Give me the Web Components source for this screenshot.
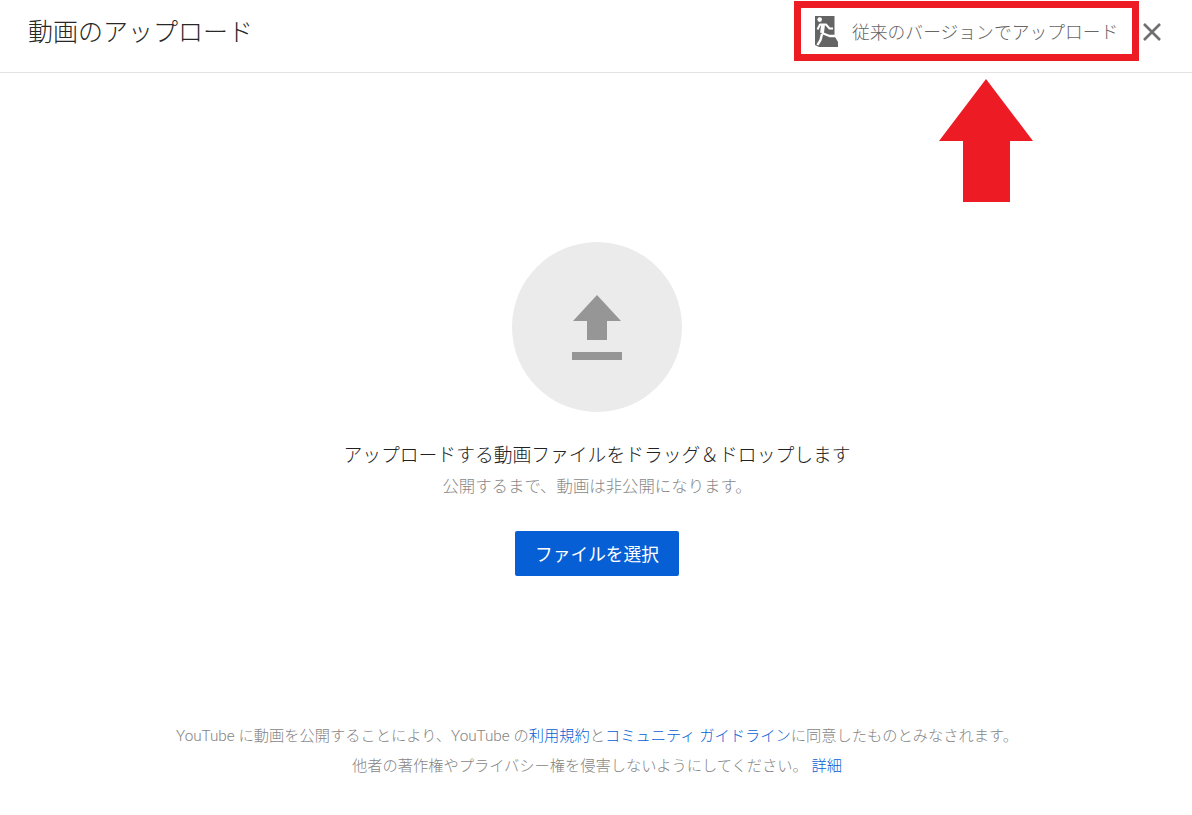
<!DOCTYPE html>
<html lang="ja">
<head>
<meta charset="utf-8">
<title>動画のアップロード</title>
<style>
  html, body { margin: 0; height: 100%; background: #fff; }
  body { font-family: Roboto, "Noto Sans CJK JP", sans-serif; overflow: hidden; }
</style>
</head>
<body>
<upload-dialog>
  <span slot="title">動画のアップロード</span>
  <legacy-link slot="legacy">従来のバージョンでアップロード</legacy-link>
  <upload-drop
    heading="アップロードする動画ファイルをドラッグ＆ドロップします"
    note="公開するまで、動画は非公開になります。"
    action="ファイルを選択"></upload-drop>
  <terms-note slot="footer"></terms-note>
</upload-dialog>

<script>
class UploadDialog extends HTMLElement {
  constructor() {
    super();
    this.attachShadow({ mode: 'open' });
  }

  connectedCallback() {
    this.shadowRoot.innerHTML = `
      <style>
        :host { display: flex; flex-direction: column; position: relative; height: 815px; }
        header {
          display: flex;
          align-items: center;
          height: 72px;
          padding: 0 30px 0 28px;
          border-bottom: 1px solid #e3e3e3;
        }
        .title { flex: 1; font-size: 25px; color: #282828; font-weight: 300; padding-bottom: 13px; }
        .close { display: block; margin-left: 3px; margin-top: -8px; }
        main { flex: 1; display: flex; flex-direction: column; align-items: center; padding-left: 2px; }
        .callout { position: absolute; left: 939px; top: 79px; }
      </style>
      <header>
        <div class="title"><slot name="title"></slot></div>
        <slot name="legacy"></slot>
        <svg class="close" width="20" height="20" viewBox="0 0 20 20">
          <path d="M2 2 18 18M18 2 2 18" stroke="#6f6f6f" stroke-width="2.6" fill="none"/>
        </svg>
      </header>
      <main><slot></slot></main>
      <slot name="footer"></slot>
      <svg class="callout" width="94" height="123" viewBox="0 0 94 123">
        <path d="M47 0 94 62H71V123H24V62H0Z" fill="#ed1c24"/>
      </svg>
    `;
  }
}

class LegacyLink extends HTMLElement {
  constructor() {
    super();
    this.attachShadow({ mode: 'open' });
  }

  connectedCallback() {
    this.shadowRoot.innerHTML = `
      <style>
        :host {
          display: flex;
          align-items: center;
          box-sizing: border-box;
          width: 345px;
          height: 60px;
          margin-top: -10px;
          padding: 0 14px;
          border: 7px solid #ed1c24;
          color: #666;
          font-size: 17.8px;
          font-weight: 300;
          white-space: nowrap;
        }
        svg { flex: none; margin-right: 14px; }
      </style>
      <svg width="23" height="31" viewBox="0 0 23 31">
        <path fill="#646464" d="M0 0H19.500V20L23 26V31H4L0 29Z"/>
        <circle cx="4.700" cy="3.600" r="2.300" fill="#fff"/>
        <g fill="none" stroke="#fff" stroke-linejoin="round">
          <path stroke-width="2" d="M2.500 13.500 5 8.500H11L14.500 12.500H18"/>
          <path stroke-width="3.800" d="M8 9 7 17"/>
          <path stroke-width="2.400" d="M7 17 14.500 20H21"/>
          <path stroke-width="2.400" d="M7 18 5.500 24 2.500 29"/>
        </g>
      </svg>
      <span><slot></slot></span>
    `;
  }
}

class UploadDrop extends HTMLElement {
  constructor() {
    super();
    this.attachShadow({ mode: 'open' });
  }

  connectedCallback() {
    this.shadowRoot.innerHTML = `
      <style>
        :host { display: flex; flex-direction: column; align-items: center; padding-top: 169px; }
        .circle {
          display: flex;
          align-items: center;
          justify-content: center;
          width: 170px;
          height: 170px;
          border-radius: 50%;
          background: #ebebeb;
        }
        .heading { margin-top: 29px; font-size: 18.8px; line-height: 30px; color: #222; font-weight: 300; white-space: nowrap; }
        .note { margin-top: 4px; font-size: 16.4px; line-height: 24px; color: #888; font-weight: 300; white-space: nowrap; }
        button {
          margin-top: 32px;
          width: 164px;
          height: 45px;
          padding: 0 0 2px;
          border: 0;
          border-radius: 2px;
          background: #065fd4;
          color: #fff;
          font: inherit;
          font-size: 17.7px;
        }
      </style>
      <div class="circle">
        <svg width="50" height="65" viewBox="0 0 50 65">
          <path fill="#969696" d="M25 0 49 26H35V45H15V26H1ZM0 57H50V65H0Z"/>
        </svg>
      </div>
      <div class="heading">${this.getAttribute('heading')}</div>
      <div class="note">${this.getAttribute('note')}</div>
      <button>${this.getAttribute('action')}</button>
    `;
  }
}

class TermsNote extends HTMLElement {
  constructor() {
    super();
    this.attachShadow({ mode: 'open' });
  }

  connectedCallback() {
    this.shadowRoot.innerHTML = `
      <style>
        :host { display: block; padding: 0 0 34px 2px; text-align: center; color: #858585; font-size: 15.25px; line-height: 30px; font-weight: 300; }
        a { color: #065fd4; text-decoration: none; }
        div { white-space: nowrap; }
      </style>
      <div>YouTube に動画を公開することにより、YouTube の<a href="#">利用規約</a>と<a href="#">コミュニティ ガイドライン</a>に同意したものとみなされます。</div>
      <div>他者の著作権やプライバシー権を侵害しないようにしてください。 <a href="#">詳細</a></div>
    `;
  }
}

customElements.define('upload-dialog', UploadDialog);
customElements.define('legacy-link', LegacyLink);
customElements.define('upload-drop', UploadDrop);
customElements.define('terms-note', TermsNote);
</script>
</body>
</html>
